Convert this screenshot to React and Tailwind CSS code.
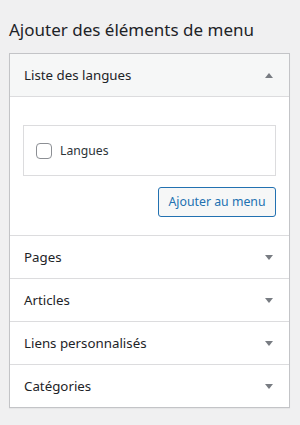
const font = { fontFamily: '"Noto Sans", "Open Sans", sans-serif' };

const Arrow = ({ up }) => (
  <svg width="8" height="5" viewBox="0 0 8 5" className="shrink-0">
    {up ? <path d="M0 5 L4 0 L8 5 Z" fill="#787c82" /> : <path d="M0 0 L8 0 L4 5 Z" fill="#787c82" />}
  </svg>
);

const Section = ({ title }) => (
  <div className="flex h-[43px] items-center justify-between border-t border-[#dcdcde] bg-white pl-[14px] pr-[16px]">
    <span className="pt-[1px] text-[13.3px] text-[#1d2327]">{title}</span>
    <Arrow />
  </div>
);

export default function App() {
  return (
    <div className="h-[425px] w-[300px] bg-[#f0f0f1] pt-[16px]" style={font}>
      <h2 className="pl-[9px] text-[17px] font-normal leading-[28px] text-[#1d2327]">Ajouter des éléments de menu</h2>
      <div className="mt-[9px] ml-[9px] w-[281px] border border-[#c3c4c7] shadow-[0_1px_1px_rgba(0,0,0,0.04)]">
        <div className="flex h-[43px] items-center justify-between border-b border-[#dcdcde] bg-[#f6f7f7] pl-[14px] pr-[16px]">
          <span className="pt-[1px] text-[13.3px] text-[#1d2327]">Liste des langues</span>
          <Arrow up />
        </div>
        <div className="bg-white pl-[13px] pr-[13px] pt-[28px] pb-[18px]">
          <div className="flex h-[51px] items-center border border-[#dcdcde] pl-[12px]">
            <span className="h-[16px] w-[16px] rounded-[4px] border border-[#8c8f94] bg-white" />
            <span className="ml-[8px] pt-[2px] text-[12.2px] text-[#2c3338]">Langues</span>
          </div>
          <div className="mt-[11px] flex justify-end">
            <button className="h-[30px] w-[118px] rounded-[3px] border border-[#2271b1] bg-[#f6f7f7] text-[12.3px] text-[#2271b1]">
              Ajouter au menu
            </button>
          </div>
        </div>
        <Section title="Pages" />
        <Section title="Articles" />
        <Section title="Liens personnalisés" />
        <Section title="Catégories" />
      </div>
    </div>
  );
}
